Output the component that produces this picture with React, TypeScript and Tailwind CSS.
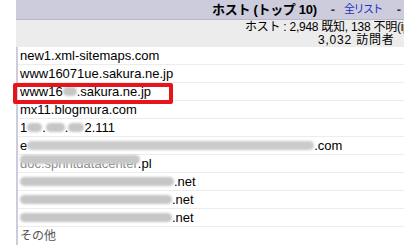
import React from 'react';

const font = { fontFamily: '"Liberation Sans", "Noto Sans CJK JP", sans-serif' };

const Blob = ({ w, className = '' }: { w: string; className?: string }) => (
  <span className={`inline-block h-[9px] align-middle rounded-full bg-[#c6c6c6] blur-[1px] ${w} ${className}`} />
);

const rows: React.ReactNode[] = [
  <>new1.xml-sitemaps.com</>,
  <>www16071ue.sakura.ne.jp</>,
  <>www16<Blob w="w-[14px]" />.sakura.ne.jp</>,
  <>mx11.blogmura.com</>,
  <>1<Blob w="w-[15px]" />.<Blob w="w-[19px]" />.<Blob w="w-[16px]" />2.111</>,
  <>e<Blob w="w-[287px]" className="bg-[#cbcbcb]" />.com</>,
  <span className="relative inline-block">
    <span className="text-[#888]">doc.sprintdatacenter</span>
    <span className="absolute left-0 top-[1px] h-[9px] w-[120px] rounded-full bg-[#c8c8c8] blur-[1px]" />
    .pl
  </span>,
  <><Blob w="w-[154px]" />.net</>,
  <><Blob w="w-[152px]" />.net</>,
  <><Blob w="w-[152px]" />.net</>,
];

export default function App() {
  return (
    <div className="relative w-[404px] h-[245px] overflow-hidden bg-white pl-[16px] text-[13px] text-black" style={font}>
      {/* header */}
      <div className="h-[20px] bg-[#ccccdd] border-b border-[#b9b9c6] flex items-center pl-[196px] whitespace-nowrap">
        <span className="font-bold text-[13px] tracking-[-0.3px]">ホスト (トップ 10)</span>
        <span className="ml-[14px] font-bold text-[#333]">-</span>
        <span className="ml-[9px] text-[11px] tracking-[-1.6px] text-[#1a2fc4]">全リスト</span>
        <span className="ml-[15px] font-bold text-[#333]">-</span>
      </div>

      {/* stats */}
      <div className="h-[27px] bg-[#ececec] text-[12px] leading-[13px] whitespace-nowrap pt-[1px]">
        <div className="pl-[229px] tracking-[-0.25px]">ホスト : 2,948 既知, 138 不明(ip)</div>
        <div className="pl-[302px] tracking-[0.8px]">3,032 訪問者</div>
      </div>

      {/* host list */}
      <div className="border-l-2 border-[#ccccdd]">
        {rows.map((r, i) => (
          <div key={i} className="h-[18px] border-b border-[#ececec] flex items-center pl-[2px] whitespace-nowrap">
            {r}
          </div>
        ))}
        <div className="h-[18px] flex items-center pl-[2px] text-[12px] text-[#555]">その他</div>
      </div>

      {/* annotation */}
      <div className="absolute left-[13px] top-[83px] w-[160px] h-[21px] border-4 border-[#e8141b] rounded-[2px]" />
    </div>
  );
}
